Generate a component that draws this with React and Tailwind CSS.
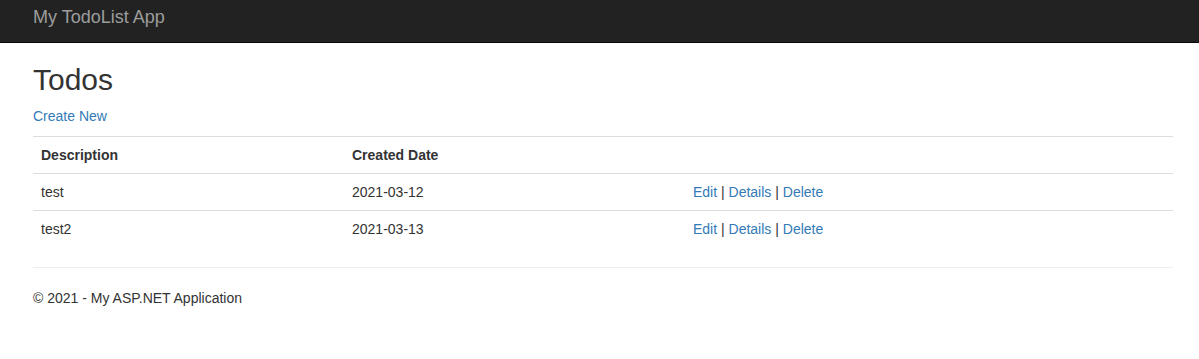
const todos = [
  { id: 1, description: "test", created: "2021-03-12" },
  { id: 2, description: "test2", created: "2021-03-13" },
];

function Actions() {
  return (
    <>
      <a href="#" className="text-[#337ab7] hover:underline">Edit</a> |{" "}
      <a href="#" className="text-[#337ab7] hover:underline">Details</a> |{" "}
      <a href="#" className="text-[#337ab7] hover:underline">Delete</a>
    </>
  );
}

export default function App() {
  return (
    <div className="min-h-[359px] bg-white text-[14px] leading-[20px] text-[#333] font-['Liberation_Sans',Arial,sans-serif]">
      {/* Navbar */}
      <nav className="h-[43px] bg-[#222] border-b border-[#080808]">
        <div className="px-[33px] pt-[7px]">
          <a href="#" className="text-[18px] leading-[20px] text-[#9d9d9d] hover:text-white">
            My TodoList App
          </a>
        </div>
      </nav>

      {/* Body */}
      <div className="px-[33px] w-[1206px]">
        <h2 className="mt-[20px] mb-[10px] text-[30px] leading-[33px] font-normal">Todos</h2>
        <p className="mb-[10px]">
          <a href="#" className="text-[#337ab7] hover:underline">Create New</a>
        </p>

        <table className="w-[1140px] border-collapse text-left">
          <thead>
            <tr className="border-t border-b border-[#ddd]">
              <th className="w-[311px] px-[8px] py-[8px] font-bold">Description</th>
              <th className="w-[341px] px-[8px] py-[8px] font-bold">Created Date</th>
              <th className="px-[8px] py-[8px]"></th>
            </tr>
          </thead>
          <tbody>
            {todos.map((t, i) => (
              <tr key={t.id} className={i > 0 ? "border-t border-[#ddd]" : ""}>
                <td className="px-[8px] py-[8px]">{t.description}</td>
                <td className="px-[8px] py-[8px]">{t.created}</td>
                <td className="px-[8px] py-[8px]">
                  <Actions />
                </td>
              </tr>
            ))}
          </tbody>
        </table>

        <hr className="mt-[20px] mb-[20px] w-[1140px] border-0 border-t border-[#eee]" />
        <footer>
          <p>© 2021 - My ASP.NET Application</p>
        </footer>
      </div>
    </div>
  );
}
